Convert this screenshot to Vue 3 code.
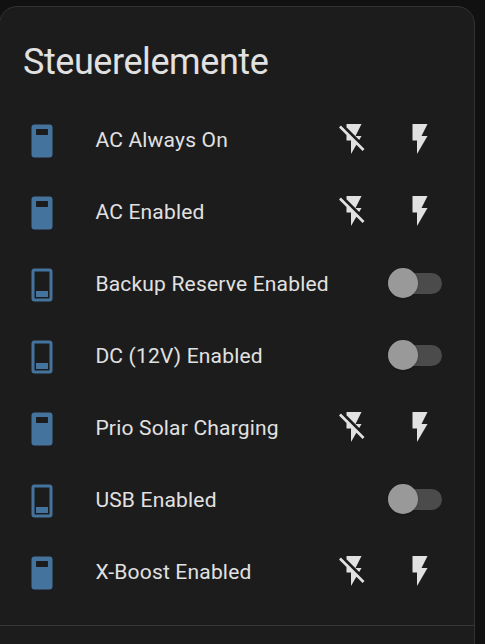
<template>
  <div class="page">
    <div class="card">
      <h1 class="card-header">Steuerelemente</h1>
      <div class="card-content">
        <div v-for="item in entities" :key="item.name" class="row">
          <svg class="state-icon" viewBox="0 0 24 24">
            <path :d="item.assumed ? icons.switchOn : icons.switchOff" />
          </svg>
          <span class="name">{{ item.name }}</span>
          <div v-if="item.assumed" class="actions">
            <button class="icon-btn" type="button" @click="item.on = false">
              <svg viewBox="0 0 24 24"><path :d="icons.flashOff" /></svg>
            </button>
            <button class="icon-btn" type="button" @click="item.on = true">
              <svg viewBox="0 0 24 24"><path :d="icons.flash" /></svg>
            </button>
          </div>
          <button
            v-else
            class="toggle"
            :class="{ checked: item.on }"
            type="button"
            role="switch"
            :aria-checked="item.on"
            @click="item.on = !item.on"
          >
            <span class="thumb"></span>
          </button>
        </div>
      </div>
      <div class="card-footer"></div>
    </div>
  </div>
</template>

<script setup>
import { ref } from 'vue'

const icons = {
  switchOn: 'M7,1H17A2,2 0 0,1 19,3V21A2,2 0 0,1 17,23H7A2,2 0 0,1 5,21V3A2,2 0 0,1 7,1M8.5,4A0.5,0.5 0 0,0 8,4.5V7.5A0.5,0.5 0 0,0 8.5,8H15.5A0.5,0.5 0 0,0 16,7.5V4.5A0.5,0.5 0 0,0 15.5,4H8.5Z',
  switchOff: 'M17,23H7A2,2 0 0,1 5,21V3A2,2 0 0,1 7,1H17A2,2 0 0,1 19,3V21A2,2 0 0,1 17,23M7,3V21H17V3H7M8,16H16V20H8V16Z',
  flash: 'M7,2V13H10V22L17,10H13L17,2H7Z',
  flashOff: 'M17,10H13L17,2H7V4.18L15.46,12.64M3.27,3L2,4.27L7,9.27V13H10V22L13.58,15.86L17.73,20L19,18.73L3.27,3Z'
}

// assumed: state is not reported back, so both on and off actions are shown
const entities = ref([
  { name: 'AC Always On', assumed: true, on: true },
  { name: 'AC Enabled', assumed: true, on: true },
  { name: 'Backup Reserve Enabled', assumed: false, on: false },
  { name: 'DC (12V) Enabled', assumed: false, on: false },
  { name: 'Prio Solar Charging', assumed: true, on: true },
  { name: 'USB Enabled', assumed: false, on: false },
  { name: 'X-Boost Enabled', assumed: true, on: true }
])
</script>

<style>
body {
  margin: 0;
  background: #111111;
}
</style>

<style scoped>
.page {
  height: 644px;
  padding-top: 6px;
  box-sizing: border-box;
  overflow: hidden;
  background: #111111;
  font-family: Roboto, "Noto Sans", sans-serif;
  color: #e1e1e1;
}

.card {
  width: 476px;
  height: 660px;
  margin-left: -1px;
  box-sizing: border-box;
  background: #1c1c1c;
  border: 1px solid #333333;
  border-radius: 18px;
}

.card-header {
  margin: 0;
  height: 103px;
  padding: 19px 23px 0;
  box-sizing: border-box;
  font-size: 36px;
  font-weight: 400;
  line-height: 72px;
  letter-spacing: -0.432px;
}

.card-content {
  height: 515px;
}

.row {
  display: flex;
  align-items: center;
  height: 60px;
  margin-bottom: 12px;
  padding: 0 32px 0 24px;
}

.state-icon {
  width: 36px;
  height: 36px;
  margin-top: 2px;
  flex-shrink: 0;
  fill: #44739e;
}

.name {
  flex: 1;
  margin-left: 35.4px;
  font-size: 21px;
  line-height: 30px;
  letter-spacing: 0.19px;
  white-space: nowrap;
}

.actions {
  display: flex;
  gap: 30px;
  margin: -2px 4px 0 0;
}

.icon-btn {
  width: 36px;
  height: 36px;
  padding: 0;
  border: none;
  background: none;
  cursor: pointer;
}

.icon-btn svg {
  display: block;
  width: 36px;
  height: 36px;
  fill: #e1e1e1;
}

.toggle {
  display: flex;
  align-items: center;
  width: 54px;
  height: 21px;
  margin-top: -1px;
  padding: 0;
  border: none;
  border-radius: 11px;
  background: #4b4b4b;
  cursor: pointer;
}

.thumb {
  width: 30px;
  height: 30px;
  margin-top: -1px;
  flex-shrink: 0;
  border-radius: 50%;
  background: #999999;
  box-shadow: 0 1px 3px rgba(0, 0, 0, 0.15);
  transition: transform 0.2s;
}

.toggle.checked .thumb {
  transform: translateX(24px);
}

.card-footer {
  border-top: 1px solid #363636;
}
</style>
